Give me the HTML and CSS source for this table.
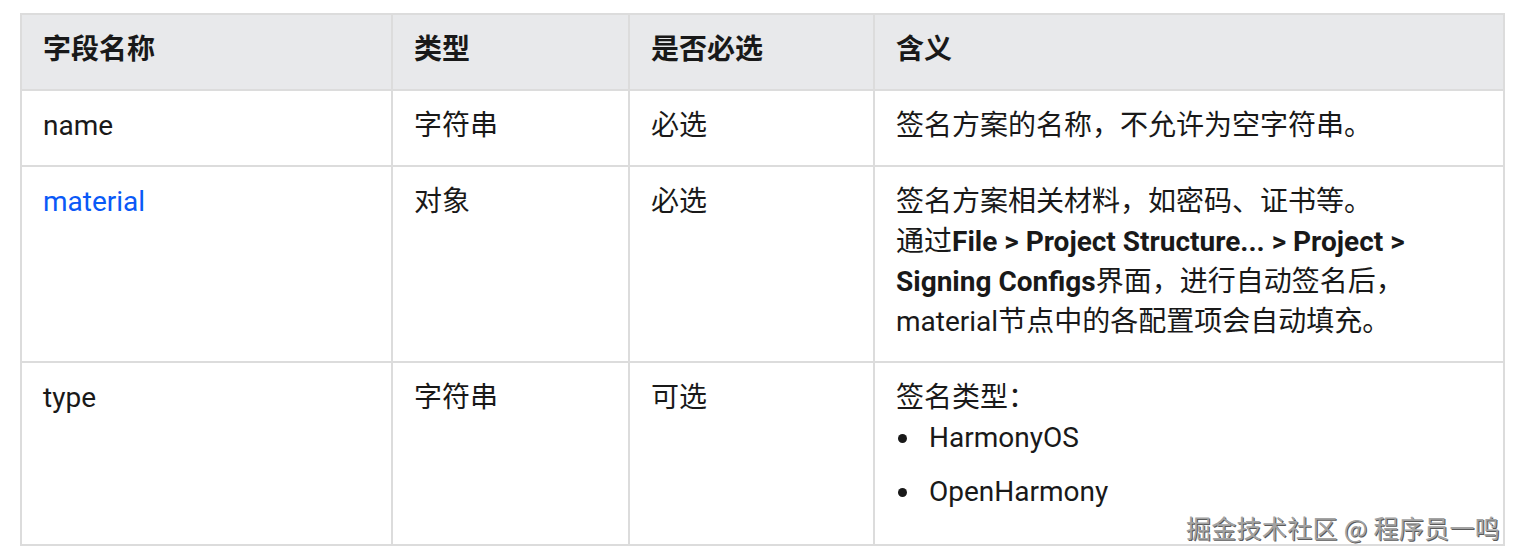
FILE: index.html
```html
<!DOCTYPE html>
<html lang="zh">
<head>
<meta charset="utf-8">
<link rel="stylesheet" href="styles.css">
</head>
<body>
<div class="page">
  <table class="spec">
    <colgroup>
      <col class="c1"><col class="c2"><col class="c3"><col class="c4">
    </colgroup>
    <thead>
      <tr><th>字段名称</th><th>类型</th><th>是否必选</th><th>含义</th></tr>
    </thead>
    <tbody>
      <tr><td>name</td><td>字符串</td><td>必选</td><td>签名方案的名称，不允许为空字符串。</td></tr>
      <tr>
        <td><a class="link" href="#">material</a></td><td>对象</td><td>必选</td>
        <td>签名方案相关材料，如密码、证书等。<br>通过<b>File &gt; Project Structure... &gt; Project &gt;<br>Signing Configs</b>界面，进行自动签名后，<br>material节点中的各配置项会自动填充。</td>
      </tr>
      <tr>
        <td><span>type</span></td><td>字符串</td><td>可选</td>
        <td>签名类型：
          <ul class="opts"><li>HarmonyOS</li><li>OpenHarmony</li></ul>
        </td>
      </tr>
    </tbody>
  </table>
  <div class="watermark">掘金技术社区 @ 程序员一鸣</div>
</div>
</body>
</html>
```

FILE: styles.css
```css
html, body {
  margin: 0;
  padding: 0;
  background: #ffffff;
}
body {
  font-family: Roboto, "Noto Sans CJK SC", sans-serif;
  color: #191919;
}
.page {
  position: relative;
  width: 1518px;
  height: 556px;
  padding: 13px 0 0 20px;
  box-sizing: border-box;
}
.spec {
  border-collapse: collapse;
  table-layout: fixed;
  width: 1483px;
  font-size: 28px;
  line-height: 40px;
}
.c1 { width: 371px; }
.c2 { width: 237px; }
.c3 { width: 245px; }
.c4 { width: 630px; }
.spec th, .spec td {
  border: 2px solid #dcdcdc;
  padding: 15px 21px 19px 21px;
  text-align: left;
  vertical-align: top;
}
.spec th {
  background: #e8e9eb;
  font-weight: 700;
}
.spec b { font-weight: 700; }
.link {
  color: #0a59f7;
  text-decoration: none;
}
.opts {
  list-style: none;
  margin: 0 0 13px 0;
  padding: 0;
}
.opts li {
  position: relative;
  padding-left: 33px;
}
.opts li::before {
  content: "";
  position: absolute;
  left: 2px;
  top: 16px;
  width: 9px;
  height: 9px;
  border-radius: 50%;
  background: #191919;
}
.opts li + li { margin-top: 14px; }
.watermark {
  position: absolute;
  right: 18px;
  bottom: 13px;
  font-family: "Noto Sans CJK SC", sans-serif;
  font-size: 25px;
  line-height: 32px;
  letter-spacing: 0.3px;
  color: #a3a3a3;
  text-shadow: 1px 1px 0 #5a5a5a, -1px -1px 0 #fff;
}
```
